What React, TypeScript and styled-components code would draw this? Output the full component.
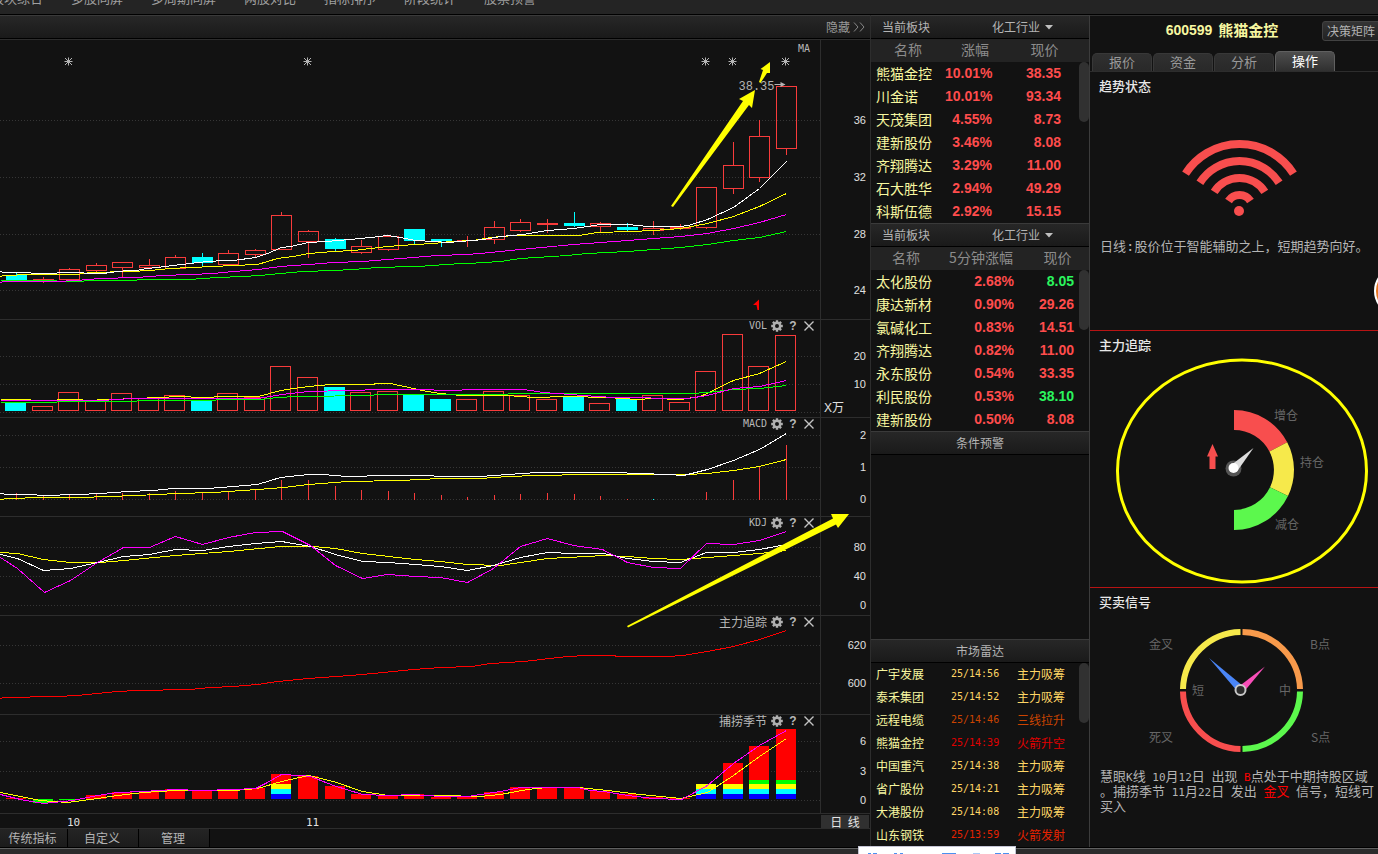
import React from "react";
import styled, { createGlobalStyle } from "styled-components";

const CJK = `"Noto Sans CJK SC", sans-serif`;
const SANS = `"Liberation Sans", "Noto Sans CJK SC", sans-serif`;
const MONO = `"DejaVu Sans Mono", "Noto Sans CJK SC", monospace`;

const color = {
  bg: "#121212",
  line: "#2d2d2d",
  up: "#ff4c4c",
  down: "#2bf55e",
  name: "#f7f7a0",
  text: "#b4b4b4",
  dim: "#666666",
};

const GlobalStyle = createGlobalStyle`
  * { box-sizing: border-box; }
  body {
    margin: 0;
    overflow: hidden;
    background: ${color.bg};
    color: ${color.text};
    font: 12px/16px ${CJK};
  }
  button, select { font: inherit; color: inherit; border: 0; padding: 0; margin: 0; background: none; cursor: pointer; }
  table { border-collapse: collapse; table-layout: fixed; width: 100%; }
  td, th { padding: 0 0 2px; font-weight: 400; }
  svg { display: block; flex: none; }
`;

/* ---------- page frame ---------- */

const Page = styled.div`
  position: relative;
  display: flex;
  flex-direction: column;
  min-height: 100vh;
  overflow: hidden;
`;

const MenuBar = styled.nav`
  height: 15px;
  overflow: hidden;
  background: #242424;
  border-bottom: 1px solid #000;
`;

const MenuList = styled.div`
  display: flex;
  gap: 28px;
  margin: -10px 0 0 -9px;
  a {
    flex: none;
    color: #a0a0a0;
    font-size: 13px;
    text-decoration: none;
  }
`;

const Workspace = styled.main`
  flex: 1;
  display: grid;
  grid-template-columns: minmax(0, 1fr) 220px 288px;
`;

const StatusBar = styled.footer`
  height: 7px;
  border-top: 1px solid #000;
  background: #2c2c2c;
  box-shadow: inset 0 1px 0 #606060;
`;

const Bar = styled.header<{ $align?: string }>`
  display: flex;
  flex: none;
  align-items: center;
  justify-content: ${(p) => p.$align ?? "flex-start"};
  height: 24px;
  border-top: 1px solid #3a3a3a;
  border-bottom: 1px solid #000;
  background: linear-gradient(#272727, #1a1a1a);
`;

/* ---------- chart column ---------- */

const ChartColumn = styled.section`
  position: relative;
  display: flex;
  flex-direction: column;
`;

const HideButton = styled.button`
  display: flex;
  align-items: center;
  gap: 3px;
  padding-right: 5px;
  color: #999;
`;

const Panels = styled.div`
  border-top: 1px solid ${color.line};
`;

const Panel = styled.section`
  display: grid;
  grid-template-columns: minmax(0, 1fr) 50px;
  border-bottom: 1px solid ${color.line};
`;

const Plot = styled.div`
  position: relative;
  display: flex;
  justify-content: flex-end;
  overflow: hidden;
`;

const AxisCell = styled.div`
  border-left: 1px solid ${color.line};
`;

const PanelTools = styled.div<{ $plain?: boolean }>`
  position: absolute;
  top: 0;
  right: ${(p) => (p.$plain ? 10 : 3)}px;
  display: flex;
  align-items: center;
  height: ${(p) => (p.$plain ? 18 : 12)}px;
  color: #b8b8b8;
`;

const PanelTitle = styled.h2<{ $latin?: boolean; $plain?: boolean }>`
  margin: 0 ${(p) => (p.$plain ? 0 : 2)}px 0 0;
  font: 400 ${(p) => (p.$latin ? 10 : 12)}px/12px ${(p) => (p.$latin ? MONO : CJK)};
`;

const ToolButton = styled.button`
  display: grid;
  place-items: center;
  width: 16px;
  height: 12px;
  font: 700 12px/12px ${SANS};
`;

const DateRow = styled.div`
  display: grid;
  grid-template-columns: minmax(0, 1fr) 50px;
  height: 15px;
  border-bottom: 1px solid ${color.line};
`;

const PeriodButton = styled.button`
  height: 13px;
  margin: 1px 1px 0;
  background: #303030;
  color: #e4e4e4;
  line-height: 12px;
`;

const BottomTabs = styled.div`
  display: flex;
  height: 18px;
`;

const BottomTab = styled.button<{ $w: number }>`
  width: ${(p) => p.$w}px;
  padding-right: 2px;
  border-right: 1px solid #000;
  background: linear-gradient(#242424, #1b1b1b);
  line-height: 18px;
`;

const Overlay = styled.svg`
  position: absolute;
  top: 0;
  right: 0;
  pointer-events: none;
`;

/* ---------- list column ---------- */

const ListColumn = styled.aside`
  display: flex;
  flex-direction: column;
  border-left: 1px solid ${color.line};
  border-right: 1px solid #3c3c3c;
`;

const BarLabel = styled.label`
  width: 121px;
  padding-left: 11px;
`;

const SectorSelect = styled.select`
  appearance: none;
  width: 53px;
  outline: none;
`;

const ListBody = styled.div`
  position: relative;
`;

const ScrollThumb = styled.div`
  position: absolute;
  top: 0;
  right: 0;
  width: 10px;
  height: 60px;
  border-radius: 5px;
  background: #313131;
`;

const HeadRow = styled.tr<{ $shift?: boolean }>`
  height: 23px;
  background: #232323;
  color: #8c8c8c;
  font-size: 14px;
  th { padding-bottom: 3px; }
  th:last-child { padding-left: ${(p) => (p.$shift ? 5 : 0)}px; padding-right: ${(p) => (p.$shift ? 0 : 5)}px; }
`;

const Row = styled.tr`
  height: 23px;
`;

const NameCell = styled.td<{ $size: number }>`
  padding-left: 5px;
  color: ${color.name};
  font-size: ${(p) => p.$size}px;
`;

const NumCell = styled.td<{ $pad: number; $down?: boolean }>`
  padding-right: ${(p) => p.$pad}px;
  text-align: right;
  font: 700 14px/16px ${SANS};
  color: ${(p) => (p.$down ? color.down : color.up)};
`;

const TimeCell = styled.td<{ $c: string }>`
  font: 10px/16px ${MONO};
  color: ${(p) => p.$c};
`;

const SignalCell = styled.td<{ $c: string }>`
  color: ${(p) => p.$c};
`;

const EmptyList = styled.div`
  flex: 1;
  min-height: 184px;
`;

/* ---------- stock column ---------- */

const StockColumn = styled.aside`
  display: flex;
  flex-direction: column;
  min-width: 0;
  border-top: 1px solid #303030;
`;

const StockHead = styled.header`
  display: flex;
  align-items: center;
  height: 30px;
`;

const StockTitle = styled.h1`
  flex: 1;
  display: flex;
  justify-content: center;
  gap: 6px;
  margin: 0;
  padding: 0 0 2px 32px;
  color: ${color.name};
  font: 700 15px/20px ${CJK};
`;

const StockCode = styled.span`
  font: 700 14px/20px ${SANS};
`;

const MatrixButton = styled.button`
  flex: none;
  height: 20px;
  margin-right: -4px;
  padding: 0 6px 0 4px;
  border: 1px solid #424242;
  border-radius: 3px;
  background: linear-gradient(#343434, #222);
  line-height: 18px;
`;

const TabList = styled.div`
  display: flex;
  align-items: flex-end;
  gap: 1px;
  height: 26px;
  padding-left: 2px;
  border-bottom: 1px solid ${color.line};
`;

const Tab = styled.button<{ $active?: boolean }>`
  width: 60px;
  height: ${(p) => (p.$active ? 20 : 18)}px;
  padding-bottom: 2px;
  border: 1px solid ${(p) => (p.$active ? "#606060" : "#383838")};
  border-bottom: 0;
  border-radius: 5px 5px 0 0;
  background: ${(p) => (p.$active ? "linear-gradient(#4e4e4e, #303030)" : "linear-gradient(#303030, #292929)")};
  color: ${(p) => (p.$active ? "#ffffff" : "#999999")};
  font-size: 13px;
  line-height: 14px;
`;

const Card = styled.section<{ $last?: boolean }>`
  border-bottom: ${(p) => (p.$last ? "0" : "1px solid #b81414")};
`;

const CardTitle = styled.h2`
  height: 28px;
  margin: 0;
  padding-left: 9px;
  color: #e8e8e8;
  font: 500 13px/27px ${CJK};
`;

const CardText = styled.p<{ $height: number }>`
  height: ${(p) => p.$height}px;
  margin: 0;
  padding-left: 10px;
  font-size: 13px;
  line-height: 15px;
  white-space: pre;
`;

const Half = styled.span<{ $wide?: boolean }>`
  font-family: ${MONO};
  font-size: ${(p) => (p.$wide ? 14 : 11)}px;
  line-height: 0;
`;

const Hot = styled.em`
  color: #ff0000;
  font-style: normal;
`;

const Floater = styled.button`
  position: absolute;
  top: 266px;
  right: -46px;
  width: 50px;
  height: 50px;
  border: 2px solid #fff;
  border-radius: 50%;
  background: #e87722;
`;

const InputStrip = styled.div`
  position: absolute;
  left: 858px;
  bottom: 0;
  width: 158px;
  height: 8px;
  overflow: hidden;
  border: 1px solid #c4c4d4;
  border-bottom: 0;
  background: #fff;
`;

/* ---------- chart data ---------- */

const XS = [16, 43, 69, 96, 122, 149, 175, 202, 228, 255, 281, 308, 335, 361, 388, 414, 441, 467, 494, 520, 547, 574, 600, 627, 653, 680, 706, 733, 759, 786];

const RED = "#f83b3b";
const CYAN = "#00ffff";

// body top, body bottom, wick top, wick bottom, falling day
const CANDLES: [number, number, number, number, number?][] = [
  [275, 280, 273, 280, 1], [279, 280, 277, 283], [269, 280, 268, 280], [265, 271, 263, 272], [262, 268, 262, 277],
  [265, 268, 259, 268], [257, 269, 255, 269], [257, 263, 253, 267, 1], [253, 265, 250, 265], [250, 255, 249, 257],
  [215, 250, 212, 250], [231, 242, 230, 258], [239, 249, 238, 251, 1], [246, 253, 240, 254], [236, 250, 235, 251],
  [229, 241, 229, 244, 1], [239, 241, 239, 247, 1], [240, 241, 236, 247], [227, 240, 221, 244], [222, 231, 219, 232],
  [223, 225, 219, 233], [223, 226, 212, 227, 1], [223, 227, 222, 232], [227, 230, 223, 231, 1], [228, 231, 221, 235],
  [227, 229, 224, 230], [187, 228, 187, 229], [165, 189, 142, 194], [136, 178, 120, 182], [86, 149, 86, 155],
];

const VOLUME = [403, 406, 392, 401, 393, 398, 395, 400, 393, 397, 366, 377, 387, 392, 391, 394, 399, 399, 391, 395, 399, 397, 403, 399, 395, 402, 371, 334, 366, 335];
const VOLUME_DOWN = [0, 7, 12, 15, 16, 21, 23];

const MACD_TOP = [493, 496, 495, 493, 493, 493, 491, 492, 491, 489, 480, 480, 486, 490, 491, 493, 495, 497, 495, 494, 493, 494, 496, 499, 499, 500, 492, 480, 466, 445];

const SEASON = [798, 799, 799, 795, 792, 791, 789, 790, 790, 788, 774, 776, 786, 794, 795, 794, 797, 797, 792, 787, 787, 787, 791, 794, 797, 798, 784, 763, 746, 729];

type Line = [string, string];

const MA_LINES: Line[] = [
  ["#00ff00", "0,280 56,280 57,281 83,281 84,280 136,280 137,279 189,279 217,277 242,276 260,275 280,273 302,271 333,270 353,269 377,267 413,266 437,265 440,264 467,263 500,261 520,258 567,255 587,253 627,251 680,247 707,244 733,240 759,237 786,231"],
  ["#ff00ff", "0,282 3,281 56,281 76,280 100,278 136,277 162,275 190,274 213,273 233,271 258,269 280,266 308,264 333,262 362,261 387,259 413,257 437,255 467,254 490,252 520,249 573,244 627,240 653,238 680,236 707,233 733,228 759,222 786,214"],
  ["#ffff00", "0,276 3,275 30,274 76,274 90,272 130,271 150,270 170,268 190,267 213,266 233,265 257,264 277,258 293,256 308,253 333,251 353,250 370,248 387,246 400,245 415,244 433,243 450,241 473,240 490,237 513,235 578,235 597,232 630,231 653,230 680,228 707,223 733,216 759,206 786,193"],
  ["#ffffff", "0,271 3,272 30,272 31,273 56,273 57,272 83,272 84,273 103,273 109,272 127,270 136,270 146,268 157,267 172,265 182,264 197,262 209,261 222,260 233,260 255,257 267,253 281,247 290,246 308,242 325,241 350,239 370,237 387,235 393,236 405,238 415,240 433,241 448,242 460,241 472,240 483,239 500,236 522,234 547,230 573,228 587,226 600,224 627,224 648,226 680,226 688,225 707,219 733,207 759,188 770,177 786,161"],
];

const VOL_LINES: Line[] = [
  ["#ffff00", "0,399 30,399 31,400 56,400 57,399 82,399 83,400 136,398 157,397 180,396 200,397 227,396 258,396 280,390 293,388 308,386 330,384 373,384 375,383 390,383 413,388 427,391 440,393 461,395 507,395 533,397 567,396 607,397 637,399 653,398 680,399 700,396 733,380 759,373 786,361"],
  ["#00ff00", "0,402 56,402 57,401 136,401 137,400 215,400 216,399 260,399 277,397 297,396 373,395 374,394 507,394 508,393 690,393 707,392 733,389 759,388 786,385"],
  ["#ff00ff", "0,400 107,400 110,399 137,398 257,398 270,396 281,394 308,391 347,390 383,389 427,389 440,390 483,389 523,389 543,392 583,395 613,397 687,398 707,395 733,388 759,386 786,380"],
];

const MACD_LINES: Line[] = [
  ["#ffff00", "0,499 7,498 43,497 80,497 107,496 136,495 177,493 213,492 257,489 283,487 308,484 347,481 400,480 440,478 480,478 507,476 537,475 587,474 687,474 707,473 733,470 759,466 786,459"],
  ["#ffffff", "0,493 7,494 30,494 43,495 77,494 100,493 127,491 153,490 173,488 207,488 233,486 257,484 280,477 308,474 322,474 347,476 387,475 427,475 440,476 480,476 507,474 537,472 613,472 640,473 667,474 683,475 707,469 733,460 759,449 786,433"],
];

const KDJ_LINES: Line[] = [
  ["#ffff00", "0,552 17,553 43,559 70,562 100,562 123,560 175,555 228,551 280,546 313,546 335,548 362,553 415,559 440,561 467,564 500,565 520,562 547,558 587,556 603,555 627,556 653,558 680,559 707,557 733,555 759,553 786,550"],
  ["#ffffff", "0,554 17,558 43,570 70,568 97,562 123,556 149,554 175,549 202,550 228,546 255,543 281,541 310,546 335,554 362,561 388,562 415,564 440,566 467,570 493,565 520,557 547,552 573,553 603,553 627,558 653,561 680,562 706,552 733,552 759,549 786,544"],
  ["#ff00ff", "0,557 17,568 44,592 70,580 97,562 123,547 149,547 175,536 202,544 228,537 255,532 282,531 310,545 335,565 362,578 387,574 415,576 440,577 467,582 493,568 520,546 547,538 573,545 602,549 627,562 653,567 680,568 706,543 733,544 759,540 786,531"],
];

const FORCE_LINES: Line[] = [
  ["#ff0000", "0,698 3,697 57,696 77,695 116,691 137,690 189,689 210,687 233,686 257,684 277,681 308,678 350,675 383,672 413,669 440,667 472,666 490,663 523,661 567,656 587,655 613,655 617,656 667,656 683,655 707,651 733,646 759,639 786,630"],
];

const SEASON_LINES: Line[] = [
  ["#ffff00", "0,792 20,796 40,800 67,802 97,798 117,795 143,792 175,790 233,790 257,788 281,781 308,775 333,781 362,791 388,795 440,795 480,796 500,794 527,789 547,787 577,787 607,790 640,794 680,798 707,792 733,775 759,756 786,738"],
  ["#ff00ff", "0,794 20,799 43,803 53,802 72,800 97,795 117,792 143,791 175,789 200,790 233,789 255,788 267,782 281,774 300,775 310,776 333,785 362,794 388,795 413,794 440,796 467,796 480,794 500,791 520,787 577,787 590,790 603,791 627,795 653,798 681,799 707,785 733,763 759,745 786,730"],
];

/* ---------- chart pieces ---------- */

function Lines({ lines }: { lines: Line[] }) {
  return (
    <>
      {lines.map(([stroke, points], i) => (
        <polyline key={i} points={points} fill="none" stroke={stroke} />
      ))}
    </>
  );
}

function Gear() {
  return (
    <svg width="12" height="12" viewBox="-6 -6 12 12" stroke="#b0b0b0" fill="none" aria-hidden="true">
      <circle r="3.2" strokeWidth="2.4" />
      {[0, 45, 90, 135].map((a) => (
        <path key={a} d="M0-5.8V-3.6M0 3.6V5.8" strokeWidth="2.4" transform={`rotate(${a})`} />
      ))}
    </svg>
  );
}

type PanelProps = {
  title: string;
  latin?: boolean;
  plain?: boolean;
  top: number;
  height: number;
  ticks: [number, string][];
  unit?: string;
  children: React.ReactNode;
};

function ChartPanel({ title, latin, plain, top, height, ticks, unit, children }: PanelProps) {
  return (
    <Panel aria-label={title}>
      <Plot>
        <svg width="820" height={height} viewBox={`0 ${top} 820 ${height}`} overflow="visible">
          <g transform="translate(.5 .5)" shapeRendering="crispEdges">
            {ticks.map(([y]) => (
              <path key={y} d={`M-2998 ${y}H820`} stroke="#363636" strokeDasharray="1 2" />
            ))}
            {children}
          </g>
        </svg>
        <PanelTools $plain={plain}>
          <PanelTitle $latin={latin} $plain={plain}>{title}</PanelTitle>
          {!plain && (
            <>
              <ToolButton aria-label="设置"><Gear /></ToolButton>
              <ToolButton aria-label="帮助">?</ToolButton>
              <ToolButton aria-label="关闭">
                <svg width="10" height="10" viewBox="0 0 10 10" stroke="#c4c4c4" strokeWidth="1.4"><path d="M.5.5l9 9M9.5.5l-9 9" /></svg>
              </ToolButton>
            </>
          )}
        </PanelTools>
      </Plot>
      <AxisCell>
        <svg width="49" height={height} viewBox={`0 ${top} 49 ${height}`} fill="#e0e0e0" fontSize="11" fontFamily={SANS}>
          {ticks.map(([y, t]) => (
            <text key={y} x="45" y={y + 4} textAnchor="end">{t}</text>
          ))}
          {unit && <text x="3" y="412" fontSize="12">{unit}</text>}
        </svg>
      </AxisCell>
    </Panel>
  );
}

function Candles() {
  return (
    <>
      {CANDLES.map(([t, b, wt, wb, down], i) => {
        const c = down ? CYAN : RED;
        const x = XS[i];
        return (
          <g key={i} stroke={c}>
            {wt < t && <path d={`M${x} ${wt - 0.5}V${t}`} />}
            {wb > b && <path d={`M${x} ${b - 1}V${wb - 0.5}`} />}
            {b - t <= 1 ? <path d={`M${x - 10.5} ${t}h21`} /> : <rect x={x - 10} y={t} width="20" height={b - t - 1} fill={down ? c : "none"} />}
          </g>
        );
      })}
    </>
  );
}

function SeasonBars() {
  return (
    <g transform="translate(-.5 -.5)">
      {SEASON.map((y, i) => {
        const x = XS[i] - 10;
        const banded = i === 10 || i >= 26;
        if (i === 1 || i === 2) return <rect key={i} x={x} y="799" width="20" height={i === 1 ? 4 : 1} fill="#00ff00" />;
        return (
          <g key={i}>
            <rect x={x} y={y} width="20" height={799 - y} fill="#ff0000" />
            {banded && (
              <>
                {i >= 28 && <rect x={x} y="780" width="20" height="4" fill="#00ff00" />}
                <rect x={x} y="784" width="20" height="5" fill="#ffff00" />
                <rect x={x} y="789" width="20" height="5" fill="#00ffff" />
                <rect x={x} y="794" width="20" height="5" fill="#0000ff" />
              </>
            )}
          </g>
        );
      })}
    </g>
  );
}

function Charts() {
  return (
    <ChartColumn>
      <Bar $align="flex-end">
        <HideButton>
          隐藏
          <svg width="12" height="10" viewBox="0 0 12 10" fill="none" stroke="#888"><path d="M1 .5L5 5 1 9.500M7 .5L11 5 7 9.500" /></svg>
        </HideButton>
      </Bar>
      <Panels>
        <ChartPanel title="MA" latin plain top={40} height={279} ticks={[[120, "36"], [177, "32"], [234, "28"], [290, "24"]]}>
          <Candles />
          <Lines lines={MA_LINES} />
          <g shapeRendering="auto" stroke="#b4b4b4" fill="none">
            {[68, 307, 705, 732, 785].map((x) => (
              <path key={x} d={`M${x} 57v8M${x - 4} 61h8M${x - 3.5} 57.500l7 7M${x + 3.5} 57.500l-7 7`} />
            ))}
            <path d="M774 84h10" />
            <path d="M780 81.500l5 2.500-5 2.500z" fill="#b4b4b4" stroke="none" />
          </g>
          <text x="738" y="89" fontSize="12" fontFamily={`"Liberation Mono", monospace`} fill="#b4b4b4">38.35</text>
          <path d="M752.500 304.500L758.500 299v10.500H757l-1-5z" fill="#ff0000" shapeRendering="auto" />
        </ChartPanel>
        <ChartPanel title="VOL" latin top={320} height={97} ticks={[[356, "20"], [384, "10"], [412, ""]]} unit="X万">
          {VOLUME.map((y, i) => {
            const down = VOLUME_DOWN.includes(i);
            return <rect key={i} x={XS[i] - 11} y={y} width="20" height={410 - y} fill={down ? CYAN : "none"} stroke={down ? CYAN : RED} />;
          })}
          <Lines lines={VOL_LINES} />
        </ChartPanel>
        <ChartPanel title="MACD" latin top={418} height={98} ticks={[[435, "2"], [467, "1"], [499, "0"]]}>
          {MACD_TOP.map((y, i) => (
            <path key={i} d={`M${XS[i]} ${y - 0.5}V499.500`} stroke={i === 24 ? CYAN : RED} />
          ))}
          <Lines lines={MACD_LINES} />
        </ChartPanel>
        <ChartPanel title="KDJ" latin top={517} height={98} ticks={[[547, "80"], [576, "40"], [605, "0"]]}>
          <Lines lines={KDJ_LINES} />
        </ChartPanel>
        <ChartPanel title="主力追踪" top={616} height={98} ticks={[[645, "620"], [683, "600"]]}>
          <Lines lines={FORCE_LINES} />
        </ChartPanel>
        <ChartPanel title="捕捞季节" top={715} height={98} ticks={[[741, "6"], [771, "3"], [800, "0"]]}>
          <SeasonBars />
          <Lines lines={SEASON_LINES} />
        </ChartPanel>
      </Panels>
      <DateRow>
        <Plot>
          <svg width="820" height="14" viewBox="0 0 820 14" fill="#e0e0e0" fontSize="11" fontFamily={MONO}>
            <text x="67" y="12">10</text>
            <text x="306" y="12">11</text>
          </svg>
        </Plot>
        <PeriodButton>日&nbsp;&nbsp;线</PeriodButton>
      </DateRow>
      <BottomTabs>
        <BottomTab $w={68}>传统指标</BottomTab>
        <BottomTab $w={71}>自定义</BottomTab>
        <BottomTab $w={71}>管理</BottomTab>
      </BottomTabs>
      <Overlay width="870" height="832" viewBox="0 15 870 832" fill="#ffff00" aria-hidden="true">
        <path d="M671 206L743 101 739 99 755 90 752 108 749 105 673 207z" />
        <path d="M759 82L763 70 760.500 69 770 62 770 73 767 73 760.500 83z" />
        <path d="M627 626L833 518.500 831 514H849L838 528 836 524.500 628 627.500z" />
      </Overlay>
    </ChartColumn>
  );
}

/* ---------- lists ---------- */

type Quote = [string, string, string, boolean?];

const DAY: Quote[] = [
  ["熊猫金控", "10.01%", "38.35"], ["川金诺", "10.01%", "93.34"], ["天茂集团", "4.55%", "8.73"], ["建新股份", "3.46%", "8.08"],
  ["齐翔腾达", "3.29%", "11.00"], ["石大胜华", "2.94%", "49.29"], ["科斯伍德", "2.92%", "15.15"],
];

const FIVE_MIN: Quote[] = [
  ["太化股份", "2.68%", "8.05", true], ["康达新材", "0.90%", "29.26"], ["氯碱化工", "0.83%", "14.51"], ["齐翔腾达", "0.82%", "11.00"],
  ["永东股份", "0.54%", "33.35"], ["利民股份", "0.53%", "38.10", true], ["建新股份", "0.50%", "8.08"],
];

const GOLD = "#ffd666";
const RADAR: [string, string, string, string][] = [
  ["广宇发展", "25/14:56", "主力吸筹", GOLD], ["泰禾集团", "25/14:52", "主力吸筹", GOLD], ["远程电缆", "25/14:46", "三线拉升", "#cc4400"],
  ["熊猫金控", "25/14:39", "火箭升空", "#e00000"], ["中国重汽", "25/14:38", "主力吸筹", GOLD], ["省广股份", "25/14:21", "主力吸筹", GOLD],
  ["大港股份", "25/14:08", "主力吸筹", GOLD], ["山东钢铁", "25/13:59", "火箭发射", "#e62200"],
];

type QuoteListProps = { id: string; change: string; rows: Quote[]; cols: number[]; pads: [number, number]; shift?: boolean };

function QuoteList({ id, change, rows, cols, pads, shift }: QuoteListProps) {
  return (
    <>
      <Bar>
        <BarLabel htmlFor={id}>当前板块</BarLabel>
        <SectorSelect id={id} defaultValue="化工行业"><option>化工行业</option></SectorSelect>
        <svg width="8" height="5" viewBox="0 0 8 5" fill="#c0c0c0" aria-hidden="true"><path d="M0 0h8L4 4.500z" /></svg>
      </Bar>
      <ListBody>
        <table>
          <colgroup>{cols.map((w, i) => <col key={i} width={w} />)}</colgroup>
          <thead>
            <HeadRow $shift={shift}><th>名称</th><th>{change}</th><th>现价</th></HeadRow>
          </thead>
          <tbody>
            {rows.map(([name, pct, price, down]) => (
              <Row key={name}>
                <NameCell $size={14}>{name}</NameCell>
                <NumCell $pad={pads[0]}>{pct}</NumCell>
                <NumCell $pad={pads[1]} $down={down}>{price}</NumCell>
              </Row>
            ))}
          </tbody>
        </table>
        <ScrollThumb style={{ top: 23 }} />
      </ListBody>
    </>
  );
}

function Lists() {
  return (
    <ListColumn>
      <QuoteList id="sector-day" change="涨幅" rows={DAY} cols={[74, 60, 84]} pads={[13, 28]} />
      <QuoteList id="sector-5m" change="5分钟涨幅" rows={FIVE_MIN} cols={[70, 80, 68]} pads={[7, 15]} shift />
      <Bar $align="center">条件预警</Bar>
      <EmptyList />
      <Bar $align="center">市场雷达</Bar>
      <ListBody>
        <table>
          <colgroup><col width="80" /><col width="66" /><col width="72" /></colgroup>
          <tbody>
            {RADAR.map(([name, time, signal, c]) => (
              <Row key={time}>
                <NameCell $size={12}>{name}</NameCell>
                <TimeCell $c={c}>{time}</TimeCell>
                <SignalCell $c={c}>{signal}</SignalCell>
              </Row>
            ))}
          </tbody>
        </table>
        <ScrollThumb />
      </ListBody>
    </ListColumn>
  );
}

/* ---------- stock column ---------- */

function TrendSignal() {
  return (
    <svg width="288" height="138" viewBox="1090 100 288 138" fill="none" stroke="#f84e4e" strokeWidth="8" role="img" aria-label="趋势状态">
      {[64, 47, 30, 13].map((r) => {
        const dx = r * 0.843;
        const y = 208 - r * 0.537;
        return <path key={r} d={`M${1239.5 - dx} ${y}A${r} ${r} 0 0 1 ${1239.5 + dx} ${y}`} />;
      })}
      <circle cx="1239" cy="211" r="5" fill="#f84e4e" stroke="none" />
    </svg>
  );
}

function ForceGauge() {
  return (
    <svg width="288" height="228" viewBox="1090 359 288 228" overflow="visible" role="img" aria-label="主力追踪">
      <g transform="translate(1234 470)">
        <path d="M0-60A60 60 0 0 1 53.200-27.800L35.400-18.500A40 40 0 0 0 0-40z" fill="#f84e4e" />
        <path d="M53.200-27.800A60 60 0 0 1 54 26L36 17.300A40 40 0 0 0 35.400-18.500z" fill="#f6e94b" />
        <path d="M54 26A60 60 0 0 1 0 60V40A40 40 0 0 0 36 17.300z" fill="#5cf84d" />
      </g>
      <circle cx="1233.500" cy="468.500" r="8" fill="#555" />
      <path d="M1230.500 465.500L1253.500 448 1237 471.500z" fill="#ddd" />
      <circle cx="1233.500" cy="468" r="5" fill="#fff" />
      <path d="M1212.500 444l5.500 12.500h-2.500V469h-6v-12.500H1207z" fill="#f84e4e" />
      <g fill={color.dim} fontSize="12" fontFamily={CJK}>
        <text x="1274" y="420">增仓</text>
        <text x="1300" y="467">持仓</text>
        <text x="1275" y="529">减仓</text>
      </g>
      <ellipse cx="1242" cy="471" rx="124.500" ry="111" fill="none" stroke="#ffff00" strokeWidth="3" />
    </svg>
  );
}

function SignalClock() {
  return (
    <svg width="288" height="152" viewBox="1090 616 288 152" role="img" aria-label="买卖信号">
      <g transform="translate(1241.500 690.500)" fill="none" strokeWidth="6">
        <path d="M-58.500-1.500A58.500 58.500 0 0 1-1-58.500" stroke="#f6e94b" />
        <path d="M1-58.500A58.500 58.500 0 0 1 58.500-1.500" stroke="#f89a4b" />
        <path d="M58.500 1A58.500 58.500 0 0 1 1 58.500" stroke="#5cf84d" />
        <path d="M-1 58.500A58.500 58.500 0 0 1-58.500 1" stroke="#f84e4e" />
      </g>
      <path d="M1209 658L1243 686 1237.500 691.500z" fill="#4a86f8" />
      <path d="M1265 666.500L1239.500 686 1245 690.500z" fill="#f84eb8" />
      <circle cx="1240.500" cy="690" r="5" fill="#2c2c2c" stroke="#c8c8c8" strokeWidth="2" />
      <g fill={color.dim} fontSize="12" fontFamily={CJK}>
        <text x="1149" y="649">金叉</text>
        <text x="1310" y="649">B点</text>
        <text x="1149" y="742">死叉</text>
        <text x="1311" y="742">S点</text>
        <text x="1192" y="695">短</text>
        <text x="1279" y="695">中</text>
      </g>
    </svg>
  );
}

function Stock() {
  return (
    <StockColumn>
      <StockHead>
        <StockTitle><StockCode>600599</StockCode>熊猫金控</StockTitle>
        <MatrixButton>决策矩阵</MatrixButton>
      </StockHead>
      <TabList role="tablist">
        {["报价", "资金", "分析", "操作"].map((t) => (
          <Tab key={t} role="tab" aria-selected={t === "操作"} $active={t === "操作"}>{t}</Tab>
        ))}
      </TabList>
      <Card>
        <CardTitle>趋势状态</CardTitle>
        <TrendSignal />
        <CardText $height={92}>日线<Half $wide>:</Half>股价位于智能辅助之上，短期趋势向好。</CardText>
      </Card>
      <Card>
        <CardTitle>主力追踪</CardTitle>
        <ForceGauge />
      </Card>
      <Card $last>
        <CardTitle>买卖信号</CardTitle>
        <SignalClock />
        <CardText $height={60}>
          慧眼<Half>K</Half>线<Half> 10</Half>月<Half>12</Half>日<Half> </Half>出现<Half> <Hot>B</Hot></Half>点处于中期持股区域<br />
          。捕捞季节<Half> 11</Half>月<Half>22</Half>日<Half> </Half>发出<Half> </Half><Hot>金叉</Hot><Half> </Half>信号，短线可<br />
          买入
        </CardText>
      </Card>
    </StockColumn>
  );
}

export default function App() {
  return (
    <Page>
      <GlobalStyle />
      <MenuBar>
        <MenuList>
          {["板块综合", "多股同屏", "多周期同屏", "两股对比", "指标排序", "阶段统计", "股票预警"].map((m) => (
            <a key={m} href="#">{m}</a>
          ))}
        </MenuList>
      </MenuBar>
      <Workspace>
        <Charts />
        <Lists />
        <Stock />
      </Workspace>
      <StatusBar />
      <Floater aria-label="助手" />
      <InputStrip>
        <svg width="156" height="7" viewBox="859 847 156 7" fill="#4a90f0" aria-hidden="true">
          <path d="M868 853h3v1h-3zM873 853h4v1h-4zM894 853h3v1h-3zM900 853h3v1h-3zM942 853h14v1h-14zM995 853h6v1h-6zM1003 853h6v1h-6z" />
          <path d="M973 853h7v1h-7z" fill="#a8c8f8" />
        </svg>
      </InputStrip>
    </Page>
  );
}
